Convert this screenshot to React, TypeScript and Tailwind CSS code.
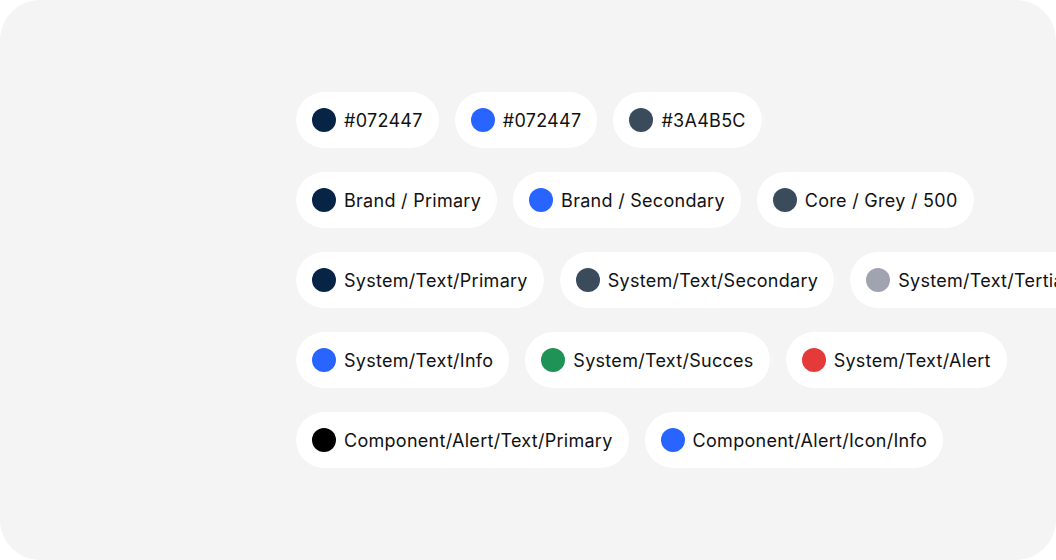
const rows: { label: string; color: string }[][] = [
  [
    { label: "#072447", color: "bg-[#072447]" },
    { label: "#072447", color: "bg-[#2864ff]" },
    { label: "#3A4B5C", color: "bg-[#3a4b5c]" },
  ],
  [
    { label: "Brand / Primary", color: "bg-[#072447]" },
    { label: "Brand / Secondary", color: "bg-[#2864ff]" },
    { label: "Core / Grey / 500", color: "bg-[#3a4b5c]" },
  ],
  [
    { label: "System/Text/Primary", color: "bg-[#072447]" },
    { label: "System/Text/Secondary", color: "bg-[#3a4b5c]" },
    { label: "System/Text/Tertiary", color: "bg-[#a0a4b0]" },
  ],
  [
    { label: "System/Text/Info", color: "bg-[#2864ff]" },
    { label: "System/Text/Succes", color: "bg-[#1f9255]" },
    { label: "System/Text/Alert", color: "bg-[#e53a3a]" },
  ],
  [
    { label: "Component/Alert/Text/Primary", color: "bg-black" },
    { label: "Component/Alert/Icon/Info", color: "bg-[#2864ff]" },
  ],
];

function Chip({ label, color }: { label: string; color: string }) {
  return (
    <div className="flex h-14 shrink-0 items-center gap-2 rounded-full bg-white px-4">
      <span className={`h-6 w-6 shrink-0 rounded-full ${color}`} />
      <span className="whitespace-nowrap pt-[2px] text-[18px] leading-6 tracking-[0.28px] text-[#111]">
        {label}
      </span>
    </div>
  );
}

export default function App() {
  return (
    <div
      className="h-[560px] w-[1056px] overflow-hidden rounded-[40px] bg-[#f4f4f4]"
      style={{ fontFamily: "Inter, 'Noto Sans', sans-serif" }}
    >
      <div className="flex flex-col gap-6 pl-[296px] pt-[92px]">
        {rows.map((row, i) => (
          <div key={i} className="flex gap-4">
            {row.map((c, j) => (
              <Chip key={j} {...c} />
            ))}
          </div>
        ))}
      </div>
    </div>
  );
}
